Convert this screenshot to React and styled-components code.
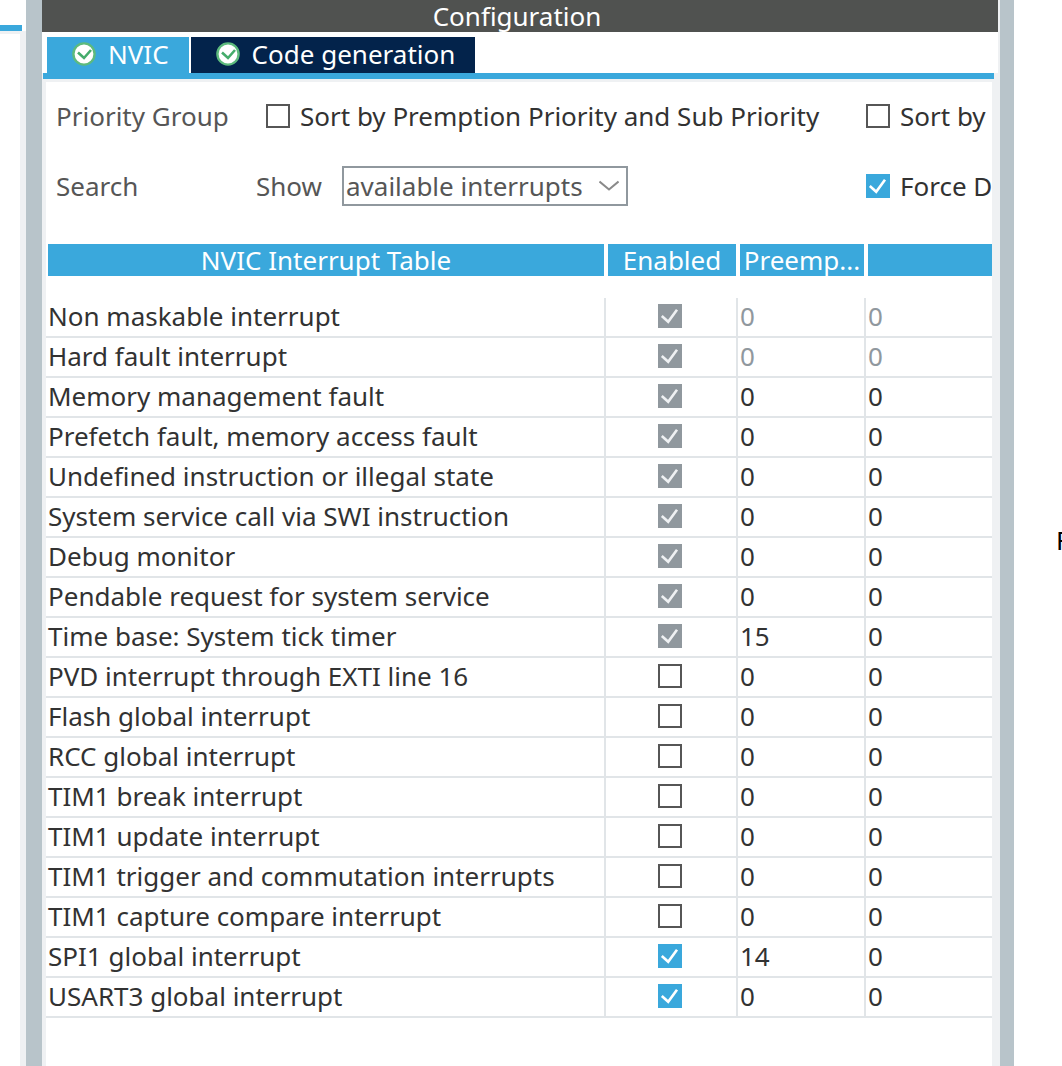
import React, { useState } from "react";
import styled, { createGlobalStyle, css } from "styled-components";

const color = {
  blue: "#3aa8dc",
  navy: "#03234b",
  title: "#505250",
  divider: "#b8c4ca",
  edge: "#eff1f3",
  line: "#e1e5e8",
  grey: "#90989e",
  label: "#565656",
  text: "#323232",
};

const GlobalStyle = createGlobalStyle`
  *, *::before, *::after { box-sizing: border-box; }
  body {
    margin: 0;
    background: #fff;
    color: ${color.text};
    font-family: "Noto Sans", "Open Sans", sans-serif;
    font-size: 26px;
    line-height: 32px;
  }
`;

const Page = styled.div`
  display: flex;
  min-height: 100vh;
  overflow: hidden;
`;

const SidePane = styled.aside`
  flex: 0 0 26px;
  display: flex;
  flex-direction: column;
  padding-top: 25px;
`;

const SideTabLine = styled.div`
  height: 6px;
  margin-right: 4px;
  background: ${color.blue};
`;

const SideBody = styled.div`
  flex: 1;
  border-top: 3px solid ${color.edge};
  border-right: 6px solid ${color.edge};
`;

const Divider = styled.div`
  flex: 0 0 ${(p) => p.$size}px;
  background: ${color.divider};
`;

const Main = styled.main`
  flex: 1;
  min-width: 0;
  display: flex;
  flex-direction: column;
  background: ${color.edge};
`;

const Title = styled.h1`
  margin: 0 2px 0 0;
  padding-right: 6px;
  background: ${color.title};
  color: #fff;
  font-size: 26px;
  font-weight: 400;
  line-height: 32px;
  text-align: center;
`;

const Tabs = styled.div`
  display: flex;
  gap: 2px;
  margin-right: 2px;
  padding: 5px 5px 0;
  background: #fff;
`;

const Tab = styled.button`
  display: flex;
  align-items: center;
  gap: 12px;
  height: 36px;
  padding: 0 20px 2px 25px;
  border: 0;
  background: ${(p) => (p.$active ? color.blue : color.navy)};
  color: #fff;
  font: inherit;
  white-space: nowrap;
`;

const TabLine = styled.div`
  height: 6px;
  margin: 0 6px 3px 1px;
  background: ${color.blue};
`;

const Panel = styled.section`
  flex: 1;
  margin: 0 8px 0 4px;
  overflow: hidden;
  background: #fff;
`;

const Filters = styled.div`
  display: grid;
  grid-template-columns: 200px minmax(0, 1fr) 126px;
  grid-auto-rows: 40px;
  row-gap: 30px;
  align-items: center;
  padding: 14px 0 38px 10px;
  white-space: nowrap;
`;

const Caption = styled.span`
  color: ${color.label};
`;

const ShowField = styled.div`
  display: flex;
  align-items: center;
  gap: 20px;
  color: ${color.label};
`;

const SelectBox = styled.span`
  display: grid;
  align-items: center;
  width: 286px;

  > * {
    grid-area: 1 / 1;
  }

  svg {
    justify-self: end;
    margin-right: 9px;
    pointer-events: none;
  }
`;

const Select = styled.select`
  appearance: none;
  width: 100%;
  height: 40px;
  padding: 0 34px 0 2px;
  border: 2px solid ${color.grey};
  border-radius: 0;
  background: #fff;
  color: ${color.label};
  font: inherit;
`;

const CheckLabel = styled.label`
  display: flex;
  align-items: center;
  gap: 10px;
  padding-left: ${(p) => (p.$indent ? 10 : 0)}px;
`;

const TickFrame = styled.span`
  display: inline-grid;
  flex: none;
  width: 24px;
  height: 24px;
  vertical-align: top;

  > * {
    grid-area: 1 / 1;
  }

  svg {
    pointer-events: none;
  }
`;

const TickInput = styled.input`
  appearance: none;
  width: 24px;
  height: 24px;
  margin: 0;
  border: 2px solid ${color.label};
  background: #fff;

  &:checked {
    border-color: ${color.blue};
    background: ${color.blue};
  }

  ${(p) =>
    p.disabled &&
    css`
      &:checked {
        border-color: ${color.grey};
        background: ${color.grey};
      }
    `}
`;

const Table = styled.table`
  width: 100%;
  table-layout: fixed;
  border-spacing: 0;
`;

const Col = styled.col`
  width: ${(p) => (p.$width ? `${p.$width}px` : "auto")};
`;

const HeadCell = styled.th`
  height: 32px;
  padding: 0;
  border: solid #fff;
  border-width: 0 2px;
  background: ${color.blue};
  color: #fff;
  font-weight: 400;
  text-align: center;
  white-space: nowrap;

  &:last-child {
    border-right: 0;
  }
`;

const Spacer = styled.tbody`
  td {
    height: 22px;
    padding: 0;
  }
`;

const Cell = styled.td`
  height: 40px;
  padding: 0 2px 2px;
  border-right: 2px solid ${color.line};
  border-bottom: 2px solid ${color.line};
  color: ${(p) => (p.$muted ? color.grey : color.text)};
  white-space: nowrap;

  &:last-child {
    border-right: 0;
  }
`;

const TickCell = styled(Cell)`
  text-align: center;
  line-height: 24px;
  padding: 0 2px 2px 0;
`;

const NextPane = styled.aside`
  flex: 0 0 48px;
  display: flex;
  align-items: center;
  padding: 14px 0 0 42px;
  overflow: hidden;
  color: #000;
`;

function StatusIcon() {
  return (
    <svg width="24" height="24" viewBox="0 0 24 24" aria-hidden="true">
      <circle cx="12" cy="12" r="10.6" fill="#fff" stroke="#5dba7d" strokeWidth="2.4" />
      <path d="M6 10.5l6 5.5 7-8" fill="none" stroke="#45ac6b" strokeWidth="2.6" />
    </svg>
  );
}

function Chevron() {
  return (
    <svg width="20" height="12" viewBox="0 0 20 12" aria-hidden="true">
      <path d="M0.5 1.5l9.5 8 9.5-8" fill="none" stroke="#8a8a8a" strokeWidth="2" />
    </svg>
  );
}

function Tick({ initial = false, disabled = false, ...rest }) {
  const [checked, setChecked] = useState(initial);
  return (
    <TickFrame>
      <TickInput
        type="checkbox"
        checked={checked}
        disabled={disabled}
        onChange={(e) => setChecked(e.target.checked)}
        {...rest}
      />
      {checked && (
        <svg width="24" height="24" viewBox="0 0 24 24" aria-hidden="true">
          <path
            d="M3.8 12l6.4 5.8L19 5.8"
            fill="none"
            stroke={disabled ? "#eff1f3" : "#fff"}
            strokeWidth="2.6"
          />
        </svg>
      )}
    </TickFrame>
  );
}

const interrupts = [
  { name: "Non maskable interrupt", on: true, locked: true, muted: true, priority: 0 },
  { name: "Hard fault interrupt", on: true, locked: true, muted: true, priority: 0 },
  { name: "Memory management fault", on: true, locked: true, priority: 0 },
  { name: "Prefetch fault, memory access fault", on: true, locked: true, priority: 0 },
  { name: "Undefined instruction or illegal state", on: true, locked: true, priority: 0 },
  { name: "System service call via SWI instruction", on: true, locked: true, priority: 0 },
  { name: "Debug monitor", on: true, locked: true, priority: 0 },
  { name: "Pendable request for system service", on: true, locked: true, priority: 0 },
  { name: "Time base: System tick timer", on: true, locked: true, priority: 15 },
  { name: "PVD interrupt through EXTI line 16", priority: 0 },
  { name: "Flash global interrupt", priority: 0 },
  { name: "RCC global interrupt", priority: 0 },
  { name: "TIM1 break interrupt", priority: 0 },
  { name: "TIM1 update interrupt", priority: 0 },
  { name: "TIM1 trigger and commutation interrupts", priority: 0 },
  { name: "TIM1 capture compare interrupt", priority: 0 },
  { name: "SPI1 global interrupt", on: true, priority: 14 },
  { name: "USART3 global interrupt", on: true, priority: 0 },
];

export default function App() {
  const [tab, setTab] = useState("NVIC");
  return (
    <>
      <GlobalStyle />
      <Page>
        <SidePane>
          <SideTabLine />
          <SideBody />
        </SidePane>
        <Divider $size={16} />
        <Main>
          <Title>Configuration</Title>
          <Tabs>
            {["NVIC", "Code generation"].map((name) => (
              <Tab key={name} type="button" $active={tab === name} onClick={() => setTab(name)}>
                <StatusIcon />
                {name}
              </Tab>
            ))}
          </Tabs>
          <TabLine />
          <Panel>
            <Filters>
              <Caption>Priority Group</Caption>
              <CheckLabel $indent>
                <Tick />
                Sort by Premption Priority and Sub Priority
              </CheckLabel>
              <CheckLabel>
                <Tick />
                Sort by
              </CheckLabel>
              <Caption>Search</Caption>
              <ShowField>
                <label htmlFor="show">Show</label>
                <SelectBox>
                  <Select id="show">
                    <option>available interrupts</option>
                  </Select>
                  <Chevron />
                </SelectBox>
              </ShowField>
              <CheckLabel>
                <Tick initial />
                Force D
              </CheckLabel>
            </Filters>
            <Table>
              <colgroup>
                <Col />
                <Col $width={132} />
                <Col $width={128} />
                <Col $width={126} />
              </colgroup>
              <thead>
                <tr>
                  <HeadCell>NVIC Interrupt Table</HeadCell>
                  <HeadCell>Enabled</HeadCell>
                  <HeadCell>Preemp...</HeadCell>
                  <HeadCell />
                </tr>
              </thead>
              <Spacer>
                <tr>
                  <td colSpan={4} />
                </tr>
              </Spacer>
              <tbody>
                {interrupts.map((row) => (
                  <tr key={row.name}>
                    <Cell>{row.name}</Cell>
                    <TickCell>
                      <Tick initial={!!row.on} disabled={!!row.locked} aria-label={row.name} />
                    </TickCell>
                    <Cell $muted={row.muted}>{row.priority}</Cell>
                    <Cell $muted={row.muted}>0</Cell>
                  </tr>
                ))}
              </tbody>
            </Table>
          </Panel>
        </Main>
        <Divider $size={14} />
        <NextPane>F</NextPane>
      </Page>
    </>
  );
}
